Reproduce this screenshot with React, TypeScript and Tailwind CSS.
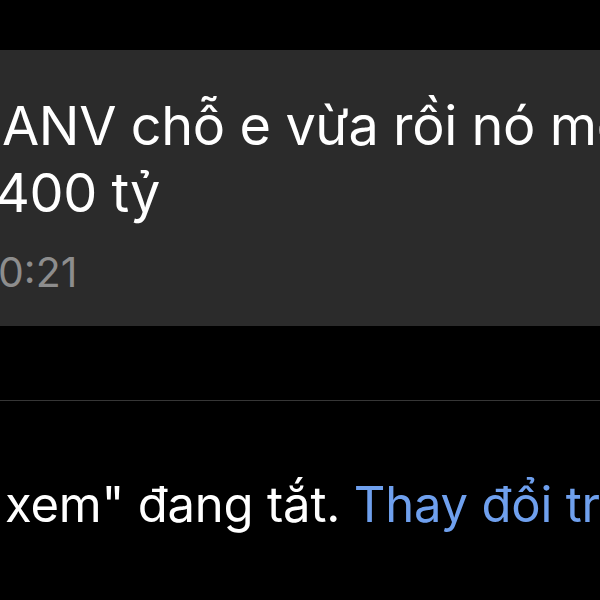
export default function App() {
  return (
    <div className="h-[600px] w-[600px] overflow-hidden bg-black font-['Inter',sans-serif] text-white">
      <div className="h-[50px]" />

      {/* message bubble, cropped on both sides */}
      <div className="h-[276px] bg-[#2b2b2b] pt-[42px]">
        <div className="whitespace-nowrap text-[54px] leading-[67px] tracking-[-0.4px]">
          <p className="ml-[2px]">ANV chỗ e vừa rồi nó mới</p>
          <p className="-ml-[5px]">400 tỷ</p>
        </div>
        <p className="mt-[21px] -ml-[2px] whitespace-nowrap text-[41px] leading-[50px] text-[#8d8d8d]">
          0:21
        </p>
      </div>

      <div className="h-[74px]" />
      <div className="h-px bg-[#363636]" />

      <p className="mt-[73px] ml-[5px] whitespace-nowrap text-[49px] leading-[62px] tracking-[-0.2px]">
        xem" đang tắt. <span className="text-[#6fa0ee]">Thay đổi trạng thái</span>
      </p>
    </div>
  );
}
